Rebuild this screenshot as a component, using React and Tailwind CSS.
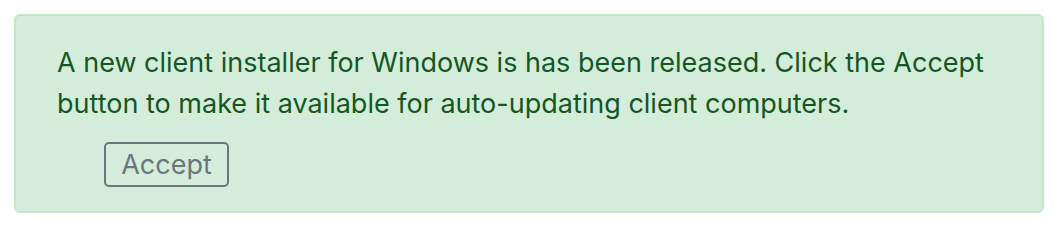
import React from 'react';

export default function App() {
  return (
    <div className="bg-white w-[1060px] h-[226px] pt-[14px] px-[14px]" style={{ fontFamily: 'Inter, "Noto Sans", sans-serif' }}>
      <div className="w-[1030px] h-[199px] bg-[#d4edda] border-2 border-[#c3e6cb] rounded-[6px] pl-[41px] pr-[20px] pt-[26px]">
        <p className="text-[#155724] text-[27px] leading-[41px] whitespace-nowrap">
          A new client installer for Windows is has been released. Click the Accept
          <br />
          button to make it available for auto-updating client computers.
        </p>
        <button className="mt-[18px] ml-[47px] w-[125px] h-[45px] border-2 border-[#6c757d] rounded-[5px] text-[#6c757d] text-[27px] leading-none">
          Accept
        </button>
      </div>
    </div>
  );
}
